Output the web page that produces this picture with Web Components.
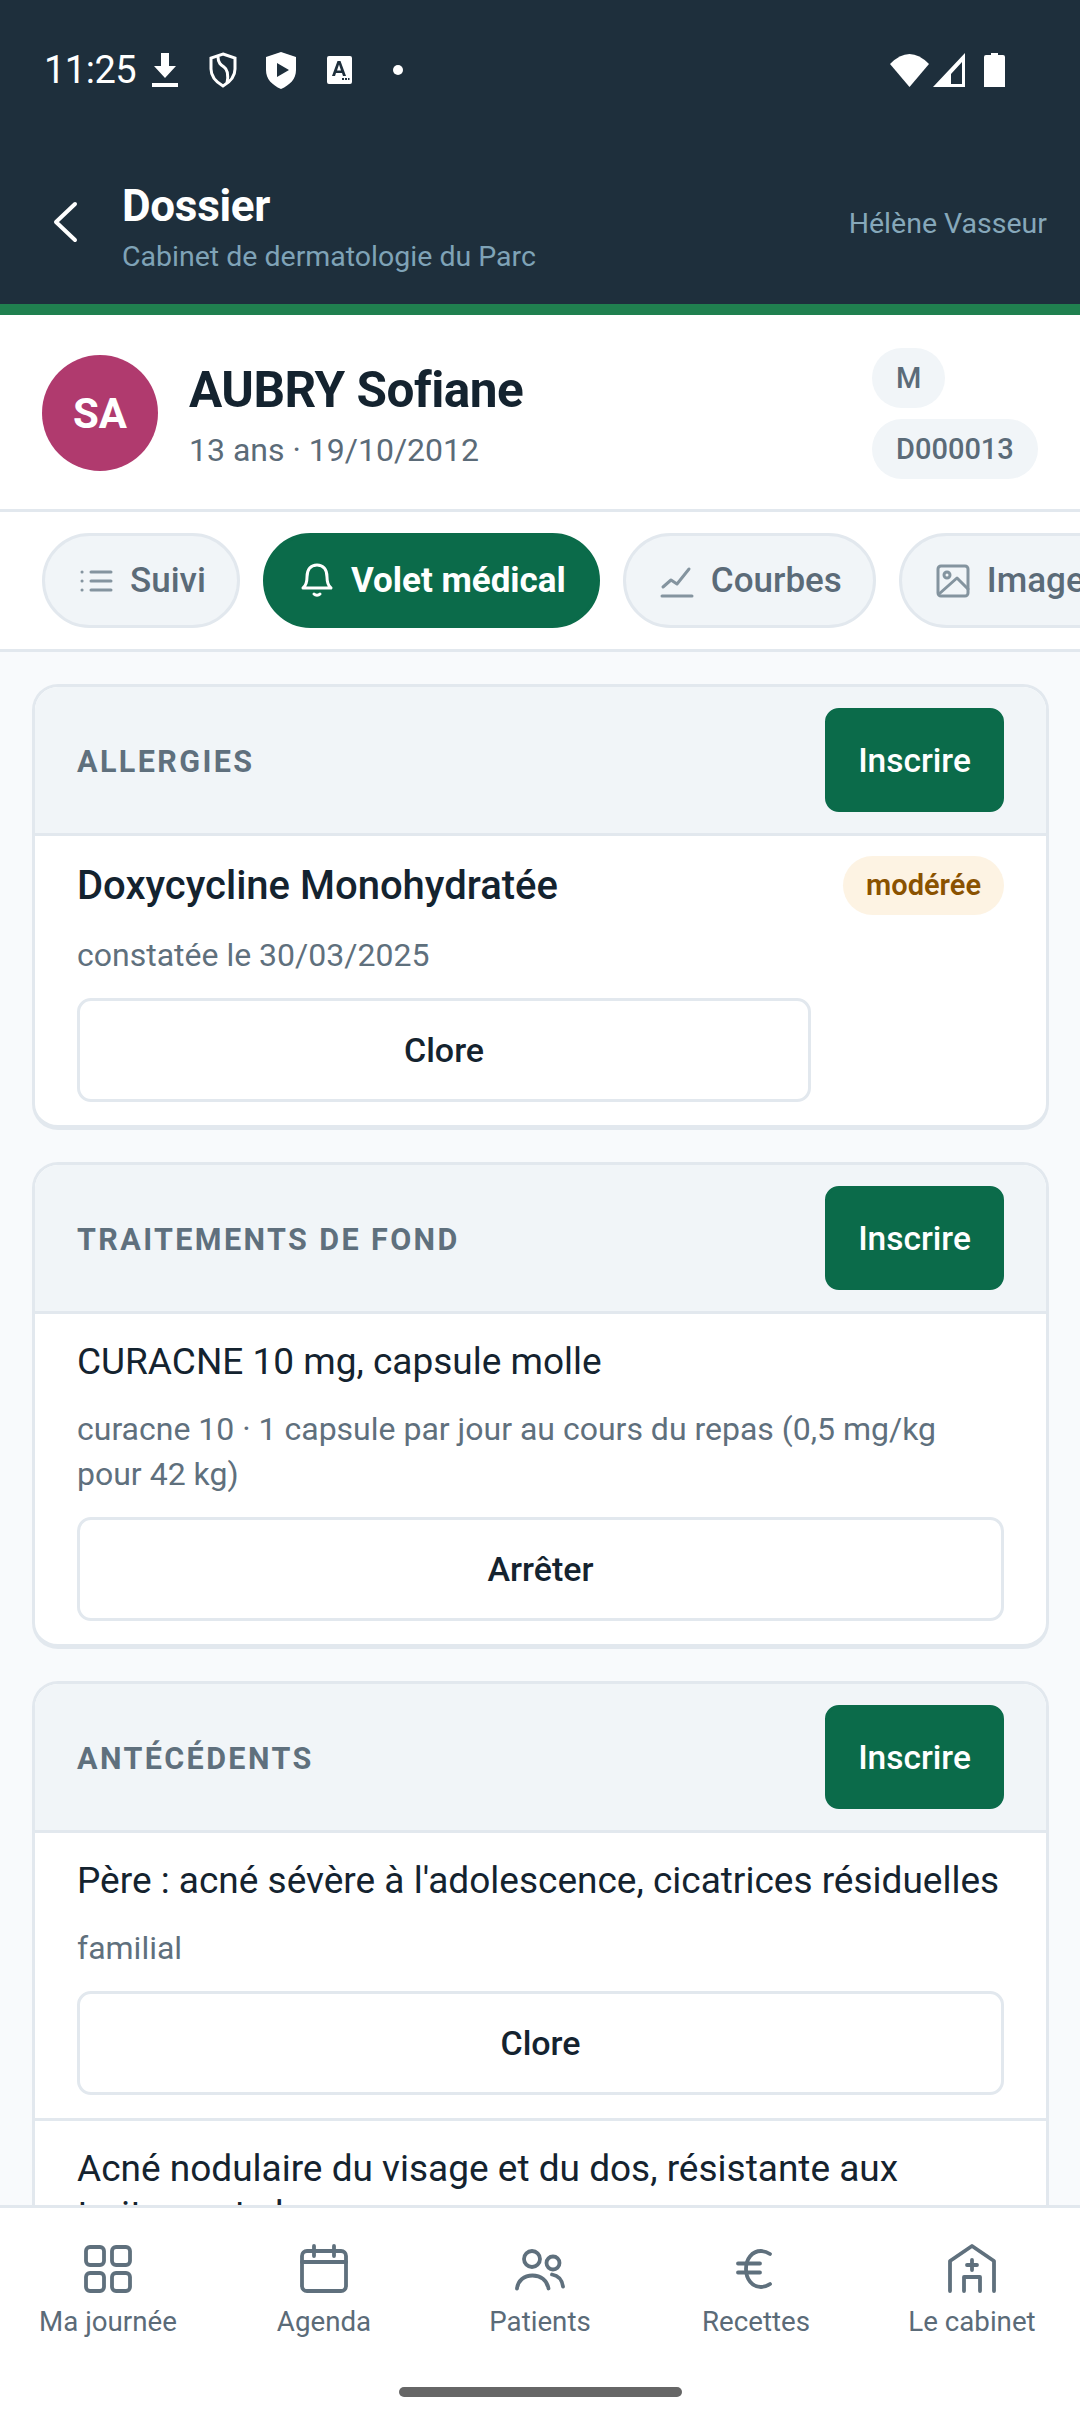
<!DOCTYPE html>
<html lang="fr">
<head>
<meta charset="utf-8">
<title>Dossier</title>
<style>
  html, body { margin: 0; height: 100%; }
  body { font-family: Roboto, "Liberation Sans", sans-serif; background: #f8fafc; overflow: hidden; }
  #app { display: flex; flex-direction: column; height: 2424px; }
  #scroll { flex: 1; min-height: 0; overflow: hidden; }
</style>
</head>
<body>
<div id="app">
  <status-bar></status-bar>
  <app-header title="Dossier" sub="Cabinet de dermatologie du Parc" user="Hélène Vasseur"></app-header>
  <patient-head initials="SA" name="AUBRY Sofiane" sub="13 ans · 19/10/2012" sex="M" ref="D000013"></patient-head>
  <tab-row>
    <tab-pill icon="list">Suivi</tab-pill>
    <tab-pill icon="bell" active>Volet médical</tab-pill>
    <tab-pill icon="chart">Courbes</tab-pill>
    <tab-pill icon="image">Images</tab-pill>
  </tab-row>
  <div id="scroll">
    <section-card heading="ALLERGIES">
      <record-item label="Doxycycline Monohydratée" meta="constatée le 30/03/2025" action="Clore" badge="modérée" strong></record-item>
    </section-card>
    <section-card heading="TRAITEMENTS DE FOND">
      <record-item label="CURACNE 10 mg, capsule molle" meta="curacne 10 · 1 capsule par jour au cours du repas (0,5 mg/kg pour 42 kg)" action="Arrêter"></record-item>
    </section-card>
    <section-card heading="ANTÉCÉDENTS">
      <record-item label="Père : acné sévère à l'adolescence, cicatrices résiduelles" meta="familial" action="Clore"></record-item>
      <record-item label="Acné nodulaire du visage et du dos, résistante aux traitements locaux" meta="personnel" action="Clore"></record-item>
    </section-card>
  </div>
  <bottom-nav></bottom-nav>
</div>

<script>
const ICONS = {
  list: '<path d="M13 9h20M13 18h20M13 27h20"/><path d="M4 9h.1M4 18h.1M4 27h.1"/>',
  bell: '<path d="M4 25c2.500-2 4-4 4-11 0-8 4-12 10-12s10 4 10 12c0 7 1.500 9 4 11z"/><path d="M15 31c1.500 1.500 4.500 1.500 6 0"/>',
  chart: '<path d="M3 33h30"/><path d="M4 24l8-7 6 4L30 6"/>',
  image: '<rect x="3" y="3" width="30" height="30" rx="3"/><circle cx="12" cy="12" r="3"/><path d="M4 31l18-16 11 11"/>'
};

class StatusBar extends HTMLElement {
  constructor() {
    super();
    this.attachShadow({mode: "open"}).innerHTML = `
    <style>
      :host { display: flex; align-items: center; height: 140px; padding: 0 75px 0 44px; background: #1e2f3c; color: #fff; box-sizing: border-box; }
      .time { font-size: 38px; line-height: 140px; width: 108px; letter-spacing: -0.5px; }
      .row { display: flex; align-items: center; }
      svg { display: block; fill: #fff; }
      .right { margin-left: auto; gap: 4px; }
    </style>
    <span class="time">11:25</span>
    <div class="row left">
      <svg width="26" height="36" viewBox="0 0 26 36"><path d="M9 1h8v13h7L13 26 2 14h7z"/><rect y="31" width="26" height="4"/></svg>
      <svg style="margin-left:30px" width="30" height="36" viewBox="0 0 30 36"><path fill="none" stroke="#fff" stroke-width="3" d="M15 2l12 4v11c0 8-5 13-12 17C8 30 3 25 3 17V6z"/><path fill="none" stroke="#fff" stroke-width="3" d="M10 5c0 6 3 8 6 10s5 6 3 16"/></svg>
      <svg style="margin-left:28px" width="30" height="37" viewBox="0 0 30 37"><path fill-rule="evenodd" d="M15 0l15 5v13c0 9-6 15-15 19C6 33 0 27 0 18V5zM11 11v14l12-7z"/></svg>
      <svg style="margin-left:31px" width="25" height="28" viewBox="0 0 25 28"><path fill-rule="evenodd" d="M2 0h21a2 2 0 0 1 2 2v24a2 2 0 0 1-2 2H2a2 2 0 0 1-2-2V2a2 2 0 0 1 2-2zM10.500 5L5 20h3l1-3h6l1 3h3L13.500 5zM12 8.500L14 14.500h-4zM15 22h2v2h-2zM18 22h2v2h-2zM21 22h1.500v2H21z"/></svg>
      <svg style="margin-left:41px" width="10" height="10" viewBox="0 0 10 10"><circle cx="5" cy="5" r="5"/></svg>
    </div>
    <div class="row right">
      <svg width="39" height="34" viewBox="0 0 39 34"><path d="M0 11Q19.500-9 39 11L19.500 34z"/></svg>
      <svg width="32" height="34" viewBox="0 0 32 34"><path fill-rule="evenodd" d="M32 0v34H0zM29 9L18 21v10h11z"/></svg>
      <svg style="margin-left:15px" width="21" height="34" viewBox="0 0 21 34"><path d="M7 0h7v2h5a2 2 0 0 1 2 2v30H0V4a2 2 0 0 1 2-2h5z"/></svg>
    </div>`;
  }
}

class AppHeader extends HTMLElement {
  connectedCallback() {
    if (this.shadowRoot) return;
    this.attachShadow({mode: "open"}).innerHTML = `
    <style>
      :host { display: flex; align-items: center; height: 175px; padding: 0 33px 0 52px; background: #1e2f3c; border-bottom: 11px solid #20804f; box-sizing: border-box; }
      svg { display: block; margin-right: 44px; flex: none; }
      .txt { flex: 1; padding-top: 13px; }
      .t { color: #fff; font-size: 44px; font-weight: 700; line-height: 50px; letter-spacing: -0.3px; }
      .s { color: #7fa3b7; font-size: 28.500px; line-height: 38px; margin-top: 7px; }
      .u { color: #86a8ba; font-size: 28.500px; padding-top: 3px; }
    </style>
    <svg width="26" height="42" viewBox="0 0 26 42" fill="none" stroke="#fff" stroke-width="4" stroke-linecap="round" stroke-linejoin="round"><path d="M23 3L4 21l19 18"/></svg>
    <div class="txt"><div class="t">${this.getAttribute("title")}</div><div class="s">${this.getAttribute("sub")}</div></div>
    <span class="u">${this.getAttribute("user")}</span>`;
  }
}

class PatientHead extends HTMLElement {
  connectedCallback() {
    if (this.shadowRoot) return;
    this.attachShadow({mode: "open"}).innerHTML = `
    <style>
      :host { display: flex; align-items: center; height: 197px; padding: 2px 42px 0; background: #fff; border-bottom: 3px solid #e2e8ee; box-sizing: border-box; }
      .av { width: 116px; height: 116px; border-radius: 50%; background: #b03a6e; color: #fff; display: flex; align-items: center; justify-content: center; font-size: 42px; font-weight: 700; flex: none; margin-right: 31px; }
      .mid { flex: 1; padding-top: 4px; }
      .n { color: #14232f; font-size: 49.500px; font-weight: 700; line-height: 60px; letter-spacing: -0.5px; }
      .a { color: #5b6b78; font-size: 32px; line-height: 40px; margin-top: 10px; }
      .chips { display: flex; flex-direction: column; align-items: flex-start; gap: 11px; width: 166px; }
      .c { background: #f1f5f8; color: #5b6b78; font-size: 29px; font-weight: 500; height: 60px; line-height: 60px; padding: 0 24px; border-radius: 30px; }
    </style>
    <div class="av">${this.getAttribute("initials")}</div>
    <div class="mid"><div class="n">${this.getAttribute("name")}</div><div class="a">${this.getAttribute("sub")}</div></div>
    <div class="chips"><span class="c">${this.getAttribute("sex")}</span><span class="c">${this.getAttribute("ref")}</span></div>`;
  }
}

class TabRow extends HTMLElement {
  constructor() {
    super();
    this.attachShadow({mode: "open"}).innerHTML = `
    <style>
      :host { display: flex; gap: 23px; height: 140px; padding: 21px 0 0 42px; background: #fff; border-bottom: 3px solid #e2e8ee; box-sizing: border-box; overflow: hidden; }
    </style>
    <slot></slot>`;
  }
}

class TabPill extends HTMLElement {
  connectedCallback() {
    if (this.shadowRoot) return;
    const on = this.hasAttribute("active");
    this.attachShadow({mode: "open"}).innerHTML = `
    <style>
      :host { display: flex; flex: none; align-items: center; gap: 16px; height: 95px; padding: 0 31px 0 33px; box-sizing: border-box; border-radius: 48px; font-size: 35px; font-weight: ${on ? 700 : 500};
        color: ${on ? "#fff" : "#5b6b78"}; background: ${on ? "#0b6b4a" : "#f1f5f8"}; border: 3px solid ${on ? "#0b6b4a" : "#e2e8ee"}; }
      svg { display: block; fill: none; stroke: ${on ? "#fff" : "#84949f"}; stroke-width: 3; stroke-linecap: round; stroke-linejoin: round; }
    </style>
    <svg width="36" height="36" viewBox="0 0 36 36">${ICONS[this.getAttribute("icon")]}</svg>
    <slot></slot>`;
  }
}

class SectionCard extends HTMLElement {
  connectedCallback() {
    if (this.shadowRoot) return;
    this.attachShadow({mode: "open"}).innerHTML = `
    <style>
      :host { display: block; margin: 32px 31px 0 32px; background: #fff; border: 3px solid #e2e8ee; border-bottom-width: 5px; border-radius: 26px; overflow: hidden; }
      .head { display: flex; align-items: center; justify-content: space-between; height: 149px; padding: 0 42px; box-sizing: border-box; background: #f1f5f8; border-bottom: 3px solid #e2e8ee; }
      h2 { margin: 0; padding-top: 2px; color: #5f707d; font-size: 30.500px; font-weight: 700; letter-spacing: 2.400px; }
      action-button { width: 179px; }
    </style>
    <div class="head"><h2>${this.getAttribute("heading")}</h2><action-button primary>Inscrire</action-button></div>
    <slot></slot>`;
  }
}

class RecordItem extends HTMLElement {
  connectedCallback() {
    if (this.shadowRoot) return;
    const badge = this.getAttribute("badge");
    const strong = this.hasAttribute("strong");
    this.attachShadow({mode: "open"}).innerHTML = `
    <style>
      :host { display: flex; gap: 32px; padding: ${strong ? 27 : 25}px 42px 23px; border-bottom: 3px solid #e2e8ee; }
      :host(:last-child) { border-bottom: 0; }
      .main { flex: 1; min-width: 0; }
      .l { color: #14232f; font-size: ${strong ? 40 : 37}px; line-height: 46px; font-weight: ${strong ? 500 : 400}; }
      .m { color: #5f707d; font-size: 32px; line-height: 45px; margin-top: ${strong ? 24 : 22}px; margin-bottom: 20px; }
      .b { flex: none; align-self: flex-start; height: 59px; line-height: 59px; padding: 0 23px; border-radius: 30px; background: #fdf3e3; color: #8a5200; font-size: 29px; font-weight: 600; margin-top: -7px; }
    </style>
    <div class="main">
      <div class="l">${this.getAttribute("label")}</div>
      <div class="m">${this.getAttribute("meta")}</div>
      <action-button>${this.getAttribute("action")}</action-button>
    </div>
    ${badge ? `<span class="b">${badge}</span>` : ""}`;
  }
}

class ActionButton extends HTMLElement {
  connectedCallback() {
    if (this.shadowRoot) return;
    const p = this.hasAttribute("primary");
    this.attachShadow({mode: "open"}).innerHTML = `
    <style>
      :host { display: flex; align-items: center; justify-content: center; height: 104px; box-sizing: border-box; border-radius: 14px; font-size: ${p ? 33.5 : 34}px; font-weight: 500;
        color: ${p ? "#fff" : "#14232f"}; background: ${p ? "#0b6b4a" : "#fff"}; border: 3px solid ${p ? "#0b6b4a" : "#e2e8ee"}; }
    </style>
    <slot></slot>`;
  }
}

class BottomNav extends HTMLElement {
  constructor() {
    super();
    const items = [
      ["Ma journée", '<rect x="6" y="6" width="18" height="18" rx="4"/><rect x="32" y="6" width="18" height="18" rx="4"/><rect x="6" y="32" width="18" height="18" rx="4"/><rect x="32" y="32" width="18" height="18" rx="4"/>'],
      ["Agenda", '<rect x="6" y="10" width="44" height="40" rx="5"/><path d="M6 21h44M18 5v10M38 5v10"/>'],
      ["Patients", '<circle cx="20" cy="18" r="8"/><path d="M5 47.500c1-8 7-13 15.500-13s14.500 5 16 13"/><circle cx="41" cy="22" r="6.500"/><path d="M40 33.500c6 1 10 5 11 12"/>'],
      ["Recettes", '<path d="M42 13c-3-2-6-3-9-3-9 0-15 8-15 18s6 18 15 18c3 0 6-1 9-3"/><path d="M10 22.500h22M10 31.500h22"/>'],
      ["Le cabinet", '<path d="M6 50V20L28 5l22 15v30"/><path d="M28 19v10M23 24h10"/><path d="M20 50V36h16v14"/>']
    ];
    this.attachShadow({mode: "open"}).innerHTML = `
    <style>
      :host { display: block; flex: none; height: 219px; background: #fff; border-top: 3px solid #e2e8ee; box-sizing: border-box; }
      .row { display: grid; grid-template-columns: repeat(5, 1fr); padding-top: 33px; }
      .it { display: flex; flex-direction: column; align-items: center; color: #5b6b78; font-size: 27.700px; line-height: 36px; }
      svg { display: block; fill: none; stroke: #5f707d; stroke-width: 3.800; stroke-linecap: round; stroke-linejoin: round; margin-bottom: 7px; }
      .home { width: 283px; height: 10px; border-radius: 5px; background: #666; margin: 47px auto 0; }
    </style>
    <div class="row">${items.map(i => `<div class="it"><svg width="56" height="56" viewBox="0 0 56 56">${i[1]}</svg>${i[0]}</div>`).join("")}</div>
    <div class="home"></div>`;
  }
}

customElements.define("status-bar", StatusBar);
customElements.define("app-header", AppHeader);
customElements.define("patient-head", PatientHead);
customElements.define("tab-row", TabRow);
customElements.define("tab-pill", TabPill);
customElements.define("action-button", ActionButton);
customElements.define("section-card", SectionCard);
customElements.define("record-item", RecordItem);
customElements.define("bottom-nav", BottomNav);
</script>
</body>
</html>
